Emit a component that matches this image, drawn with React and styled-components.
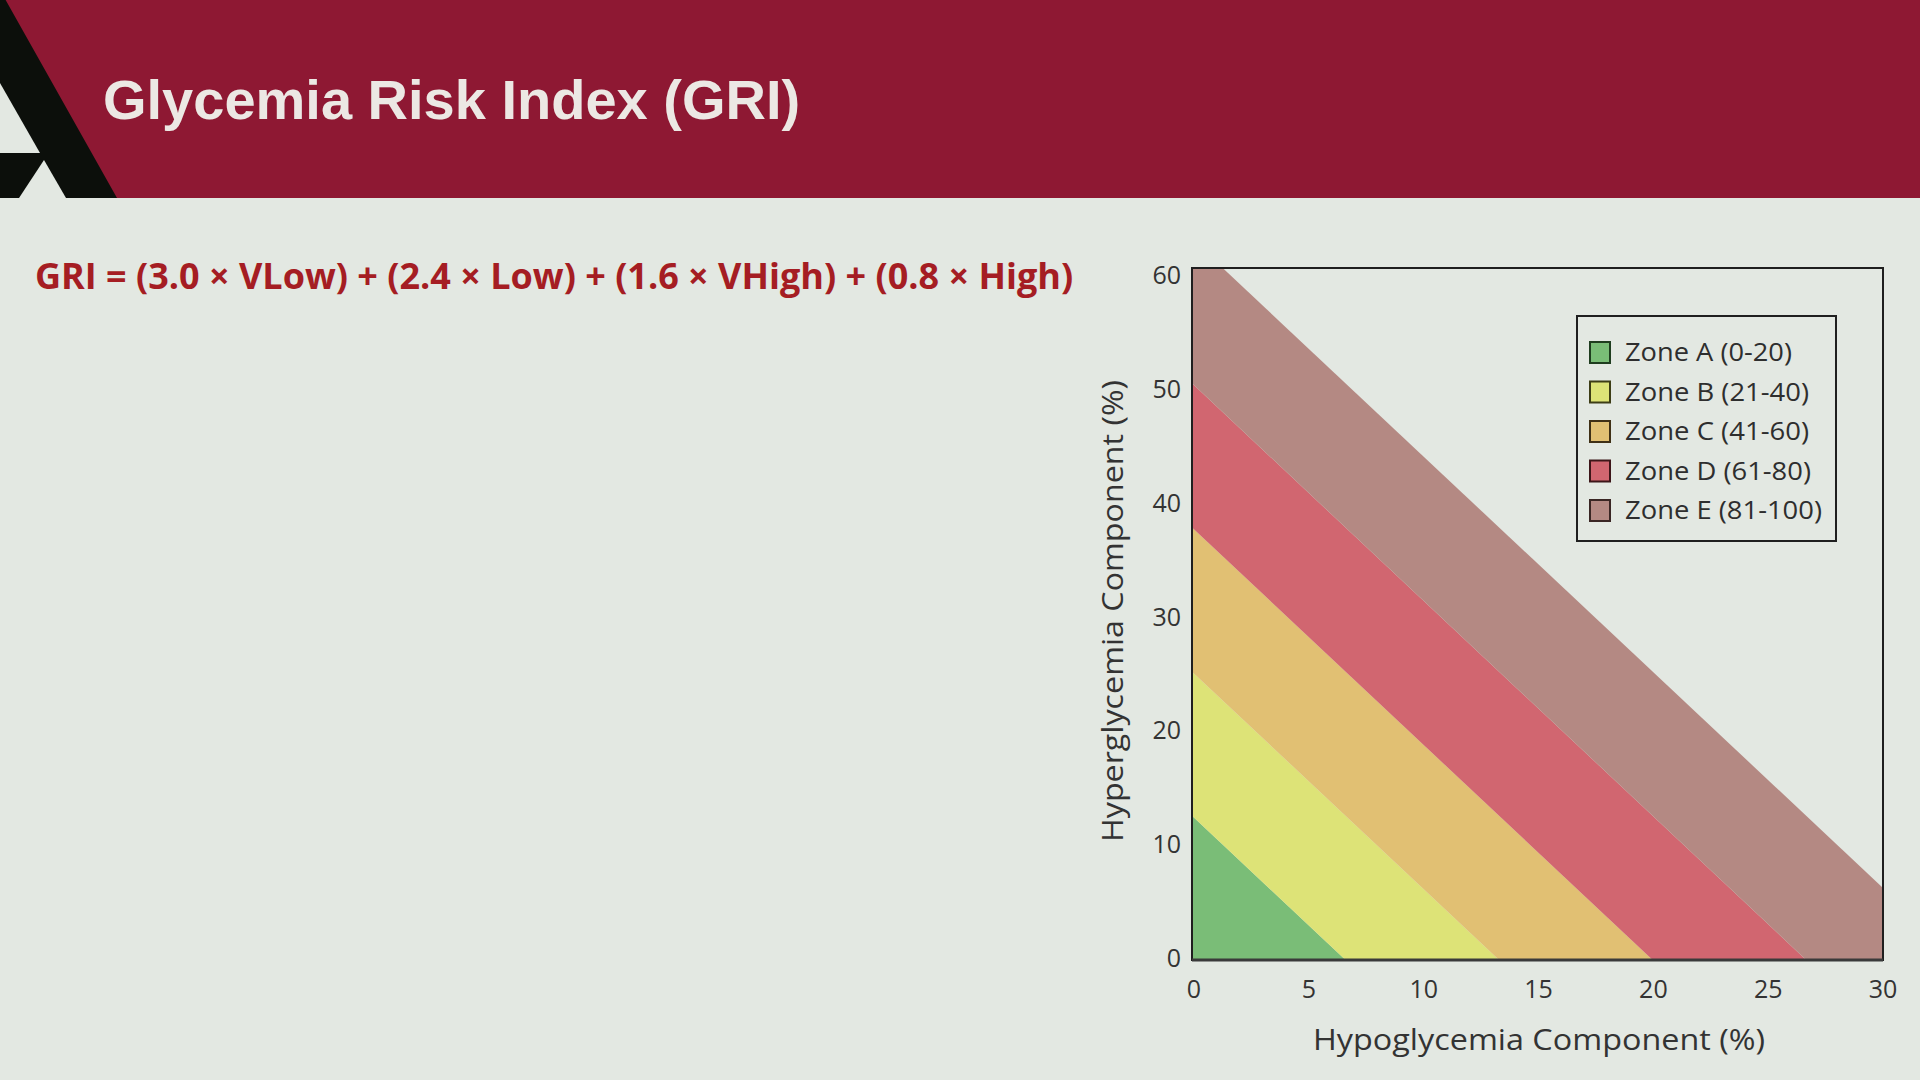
import React from "react";
import styled, { createGlobalStyle } from "styled-components";

const GlobalStyle = createGlobalStyle`
  html, body {
    margin: 0;
    padding: 0;
    background: #e3e8e2;
  }
  body {
    font-family: "Open Sans", "Liberation Sans", sans-serif;
  }
`;

// plot frame in page pixels
const PLOT = { left: 1192, right: 1883, top: 268, bottom: 960 };
const X_MAX = 30;
const Y_MAX = 60;

const sx = (v) => PLOT.left + (v * (PLOT.right - PLOT.left)) / X_MAX;
const sy = (v) => PLOT.bottom - (v * (PLOT.bottom - PLOT.top)) / Y_MAX;

const zones = [
  {
    label: "Zone A (0-20)",
    fill: "#7abd77",
    edge: "#1f3d1f",
    width: 167,
    points: [[0, 0], [6.667, 0], [0, 12.5]],
  },
  {
    label: "Zone B (21-40)",
    fill: "#dde377",
    edge: "#3d3d16",
    width: 184,
    points: [[6.667, 0], [13.333, 0], [0, 25], [0, 12.5]],
  },
  {
    label: "Zone C (41-60)",
    fill: "#e1c073",
    edge: "#3f3016",
    width: 184,
    points: [[13.333, 0], [20, 0], [0, 37.5], [0, 25]],
  },
  {
    label: "Zone D (61-80)",
    fill: "#d16670",
    edge: "#3d1619",
    width: 186,
    points: [[20, 0], [26.667, 0], [0, 50], [0, 37.5]],
  },
  {
    label: "Zone E (81-100)",
    fill: "#b48983",
    edge: "#3a2624",
    width: 197,
    points: [[26.667, 0], [30, 0], [30, 6.25], [1.333, 60], [0, 60], [0, 50]],
  },
];

const yTicks = [0, 10, 20, 30, 40, 50, 60];
const xTicks = [0, 5, 10, 15, 20, 25, 30];

export default function App() {
  return (
    <Page>
      <GlobalStyle />
      <Header>
        <LogoMark viewBox="0 0 120 198" aria-hidden="true">
          <polygon points="0,0 5.6,0 117,198 0,198" fill="#0c0f0b" />
          <polygon points="0,83 40,153 0,153" fill="#e3e8e2" />
          <polygon points="44,160 66,198 19,198" fill="#e3e8e2" />
        </LogoMark>
        <Title>Glycemia Risk Index (GRI)</Title>
      </Header>

      <Body>
        <Formula>
          GRI = (3.0 × VLow) + (2.4 × Low) + (1.6 × VHigh) + (0.8 × High)
        </Formula>

        <Chart viewBox="1080 198 840 882">
          {zones.map((z) => (
            <polygon
              key={z.label}
              points={z.points.map(([x, y]) => `${sx(x)},${sy(y)}`).join(" ")}
              fill={z.fill}
            />
          ))}
          <rect
            x={PLOT.left}
            y={PLOT.top}
            width={PLOT.right - PLOT.left}
            height={PLOT.bottom - PLOT.top}
            fill="none"
            stroke="#1f1f1f"
            strokeWidth="2"
          />
          <line
            x1={PLOT.left}
            x2={PLOT.right}
            y1={PLOT.bottom}
            y2={PLOT.bottom}
            stroke="#3a3a3a"
            strokeWidth="3"
          />

          {yTicks.map((v) => (
            <TickText key={"y" + v} x="1181" y={958 - v * 11.383 + 9} textAnchor="end">
              {v}
            </TickText>
          ))}
          {xTicks.map((v) => (
            <TickText key={"x" + v} x={1194 + v * 22.97} y="998" textAnchor="middle">
              {v}
            </TickText>
          ))}

          <AxisTitle x="1539" y="1050" textAnchor="middle" textLength="452" lengthAdjust="spacingAndGlyphs">
            Hypoglycemia Component (%)
          </AxisTitle>
          <AxisTitle
            transform="translate(1123 611) rotate(-90)"
            textAnchor="middle"
            textLength="462"
            lengthAdjust="spacingAndGlyphs"
          >
            Hyperglycemia Component (%)
          </AxisTitle>

          <rect x="1577" y="316" width="259" height="225" fill="#e3e8e2" stroke="#1f1f1f" strokeWidth="2" />
          {zones.map((z, i) => {
            const cy = 352 + i * 39.5;
            return (
              <g key={"lg" + z.label}>
                <rect x="1590" y={cy - 10} width="20" height="21" fill={z.fill} stroke={z.edge} strokeWidth="2" />
                <LegendText x="1625" y={cy + 9} textLength={z.width} lengthAdjust="spacingAndGlyphs">
                  {z.label}
                </LegendText>
              </g>
            );
          })}
        </Chart>
      </Body>
    </Page>
  );
}

const Page = styled.div`
  width: 1920px;
  height: 1080px;
  overflow: hidden;
  background: #e3e8e2;
  display: flex;
  flex-direction: column;
`;

const Header = styled.header`
  height: 198px;
  flex-shrink: 0;
  background: #8e1833;
  display: flex;
  align-items: center;
`;

const LogoMark = styled.svg`
  width: 120px;
  height: 198px;
  flex-shrink: 0;
  display: block;
`;

const Title = styled.h1`
  margin: 0 0 0 -17px;
  padding-top: 2px;
  font-family: "Liberation Sans", Arial, sans-serif;
  font-weight: 700;
  font-size: 56px;
  line-height: 56px;
  color: #ece8e4;
  white-space: nowrap;
`;

const Body = styled.main`
  flex: 1;
  display: flex;
  justify-content: space-between;
  align-items: flex-start;
  padding-left: 35px;
`;

const Formula = styled.p`
  margin: 54px 0 0;
  font-family: "Open Sans", sans-serif;
  font-weight: 700;
  font-size: 36px;
  line-height: 48px;
  color: #a51d23;
  white-space: nowrap;
`;

const Chart = styled.svg`
  width: 840px;
  height: 882px;
  flex-shrink: 0;
  display: block;
`;

const TickText = styled.text`
  font-family: "Open Sans", sans-serif;
  font-size: 25px;
  fill: #333;
`;

const AxisTitle = styled.text`
  font-family: "Open Sans", sans-serif;
  font-size: 29px;
  fill: #333;
`;

const LegendText = styled.text`
  font-family: "Open Sans", sans-serif;
  font-size: 26px;
  fill: #2e2e2e;
`;
